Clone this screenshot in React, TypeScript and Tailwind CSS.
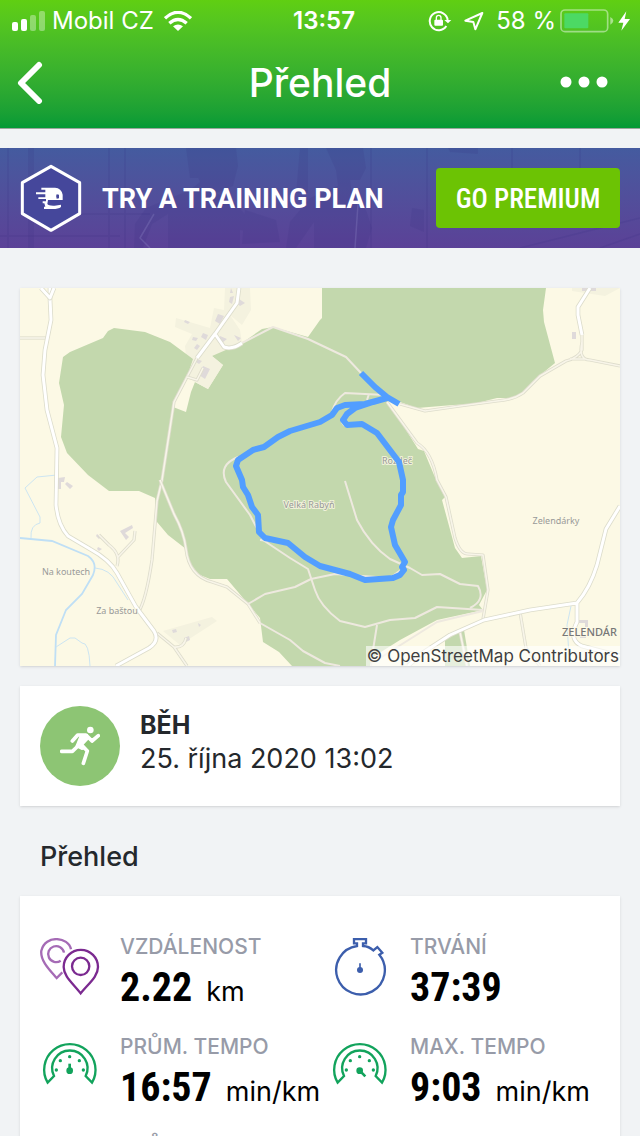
import type { ReactNode } from "react";

function StatusBar() {
  return (
    <div className="flex h-10 items-center pt-px pr-3 pl-3 text-2xl leading-10 text-white">
      <div className="flex flex-1 items-center gap-[6px]">
        <svg className="h-5 w-[34px]" viewBox="0 0 34 20" fill="#fff" aria-hidden="true">
          <rect x="0" y="11" width="6" height="9" rx="2" />
          <rect x="9" y="8" width="6" height="12" rx="2" />
          <rect x="18" y="4" width="6" height="16" rx="2" opacity=".35" />
          <rect x="27" y="0" width="6" height="20" rx="2" opacity=".35" />
        </svg>
        <span>Mobil CZ</span>
        <svg className="ml-1 h-5 w-7" viewBox="495 30 84 60" aria-hidden="true">
          <g fill="none" stroke="#fff" strokeWidth="10">
            <path d="M498 52Q537 16 576 52" />
            <path d="M511 67Q537 44 563 67" />
          </g>
          <path d="M522 76Q537 65 552 76L537 90Z" fill="#fff" />
        </svg>
      </div>
      <time className="pl-2 text-2xl font-semibold">13:57</time>
      <div className="flex flex-1 items-center justify-end">
        <svg className="mr-3 h-[22px] w-6" viewBox="325 28 72 66" aria-hidden="true">
          <path d="M380 76A27 27 0 1 1 384 58" fill="none" stroke="#fff" strokeWidth="6" />
          <path d="M374 58H395L385 68Z" fill="#fff" />
          <rect x="344" y="57" width="26" height="18" rx="3" fill="#fff" />
          <path d="M350 58V51A7 7 0 0 1 364 51V58" fill="none" stroke="#fff" strokeWidth="4" />
        </svg>
        <svg className="mr-3 h-5 w-5" viewBox="433 32 60 60" aria-hidden="true">
          <path d="M488 38L437 61L461 65L467 87Z" fill="none" stroke="#fff" strokeWidth="6" strokeLinejoin="round" />
        </svg>
        <span className="mr-1">58 %</span>
        <svg className="mr-1 h-6 w-[54px]" viewBox="719 26 162 72" aria-hidden="true">
          <rect x="722" y="29" width="140" height="65" rx="12" fill="none" stroke="#fff" strokeOpacity=".45" strokeWidth="5" />
          <rect x="732" y="39" width="72" height="45" rx="3" fill="#4cd964" />
          <path d="M870 50Q888 61 870 73Z" fill="#fff" opacity=".5" />
        </svg>
        <svg className="-mr-0.5 h-5 w-3" viewBox="895 31 36 58" aria-hidden="true">
          <path d="M920 31L896 65H911L905 89L931 54H915Z" fill="#fff" />
        </svg>
      </div>
    </div>
  );
}

function Header() {
  return (
    <header className="shrink-0 border-b border-[#9aa79d] bg-linear-to-b from-[#60cf12] to-[#039a36]">
      <StatusBar />
      <div className="flex h-[88px] items-center justify-between px-4 pb-1">
        <button type="button" aria-label="Zpět" className="flex w-20">
          <svg className="h-11 w-7" viewBox="0 0 28 44" fill="none" stroke="#fff" strokeWidth="6" strokeLinecap="round" strokeLinejoin="round" aria-hidden="true">
            <path d="M23 5L5 23L23 41" />
          </svg>
        </button>
        <h1 className="text-[39px] leading-none font-medium text-white">Přehled</h1>
        <button type="button" aria-label="Další možnosti" className="flex w-20 justify-end pr-4">
          <svg className="h-3 w-12" viewBox="0 0 48 12" fill="#fff" aria-hidden="true">
            <circle cx="6" cy="6" r="5.5" />
            <circle cx="24" cy="6" r="5.5" />
            <circle cx="42" cy="6" r="5.5" />
          </svg>
        </button>
      </div>
    </header>
  );
}

function PremiumBanner() {
  return (
    <section className="relative flex h-[100px] items-center bg-linear-to-b from-[#445b9f] to-[#5b4197] px-5">
      <svg className="absolute inset-0 h-full w-full" viewBox="0 0 640 100" preserveAspectRatio="none" aria-hidden="true">
        <g fill="#342c7c" opacity=".13">
          <path d="M196 0H236L238 18L233 38L216 45L236 56L250 72L256 84L240 82V100H168V66L152 76L143 100H134L135 76L146 60L190 42L200 34L194 20Z" />
          <path d="M326 0H363L366 20L360 32H350L352 48L366 62L372 80L366 100H314V74L296 100H286L290 74L310 50L338 38L336 22Z" />
          <path d="M186 0H200V30H190ZM300 0H308V45H296ZM28 0H34V100H28ZM245 62L276 72L280 94L242 96Z" />
          <path d="M448 0H478V6L450 4ZM412 60L424 62V84L410 78Z" />
        </g>
        <g fill="none" stroke="#342c7c" strokeOpacity=".14" strokeWidth="1.5">
          <path d="M8 0V100M109 0V100M125 0V100M371 0V100M427 0V100M512 0V80M580 0V60M0 88H120M70 66H150M640 70L520 100M640 86L600 100" />
        </g>
        <path d="M154 66L140 90L150 100M358 56L355 100" fill="none" stroke="#8d88c6" strokeOpacity=".3" strokeWidth="1.5" />
      </svg>
      <svg className="relative h-[68px] w-[62px]" viewBox="30 26 186 204" aria-hidden="true">
        <path d="M123 33L209 82V175L123 225L37 175V82Z" fill="#45479b" stroke="#fff" strokeWidth="9" strokeLinejoin="round" />
        <path d="M94 97H135Q154 98 158 118V134H122L114 134L112 146Q116 152 134 151L153 148V155Q145 161 128 161H102V154H106L103 144H98V138H108V131H85V126H106V117H78V111H106V103H94Z" fill="#fff" />
        <path d="M140 117L147 118V129L140 130Q136 124 140 117Z" fill="#45479b" />
      </svg>
      <p className="relative ml-5 flex-1 pt-0.5 font-[Roboto,sans-serif] text-[27px] leading-8 font-bold whitespace-nowrap text-white">TRY A TRAINING PLAN</p>
      <a href="#premium" className="relative flex h-15 w-[184px] items-center justify-center rounded bg-[#6cc304] pt-0.5 font-['Roboto_Condensed','Liberation_Sans_Narrow',Roboto,sans-serif] text-[27px] font-medium whitespace-nowrap text-white">
        GO PREMIUM
      </a>
    </section>
  );
}

const forest = [
  "M114 328L145 332L170 342L193 359L187 377L173 402V407L186 412L191 392L195 382L208 389L223 365L212 356L242 343L262 329L273 327L308 337L320 320L322 318V288H546L543 310L544 322L555 363L533 381L523 392L513 398H497L473 404L453 405L417 408L400 402L387 400L418 449L424 451L434 475L445 497L442 500L455 548L462 558L481 556L487 590L479 605L483 610L437 620L400 640L373 657L370 666H292L279 652L263 642L260 618L227 579H210L200 575L188 562L186 549L168 535L157 522L155 498L139 491H109L88 475L67 453L61 437L64 405L59 383L63 357L70 352L103 338L108 331Z",
  "M445 640L464 630L470 666H445Z",
];

const mainRoads = [
  "M50 288V299L51 320L45 350L43 375L47 410L57 448L56 505Q58 525 68 536L90 549Q110 560 117 573L136 607L154 631Q160 641 149 648L116 666",
  "M41 288L50 298L54 288",
  "M239 288L237 303L215 334L197 358M215 334L224 347Q232 350 242 343",
  "M590 288L578 307V315L582 335",
  "M620 506L606 529L597 565Q590 588 577 603L530 610L484 620L450 635L421 654L408 666M577 603V622Q568 640 582 646L620 656",
];

const tracks = [
  "M20 338H48",
  "M197 358L187 377L174 402L162 480L157 501L152 560Q146 600 139 611",
  "M187 377L197 380L203 368",
  "M582 335V350Q578 358 566 361L540 376L523 393Q513 400 497 401L460 406L425 411L400 404M582 342Q578 360 590 360L620 366M570 359H585",
  "M387 402L417 443Q432 452 437 480L446 497L455 538Q460 554 468 554L483 555L488 590L483 619",
  "M160 480L174 514Q184 532 186 549Q189 576 212 582L227 587L248 604L260 623",
  "M117 566Q121 554 109 545L99 535M118 557L134 540L135 531",
  "M157 633L174 647L187 666M174 647Q184 648 186 638",
  "M520 612L526 648L540 666M460 632L467 666",
];

const paths = [
  "M242 343L273 327L308 339L346 357L361 373",
  "M238 457Q218 465 226 482L250 515L263 540L290 558L308 569L315 590Q320 606 340 621L365 627L390 620L415 618L437 607L483 610",
  "M260 540L288 543M385 395L345 393Q335 400 332 412M346 413Q338 420 345 426M369 394L367 400",
  "M345 481L357 520Q370 545 390 559L410 568L422 575L440 574L460 584L478 586Q486 600 470 608",
  "M248 604L265 594L295 587L311 579L335 574L390 578L402 569",
  "M260 623L290 640L303 651L325 663L340 666M377 625L373 650L371 666",
  "M483 611L437 622L380 658",
];

const buildings =
  "M231 288L233 293H230ZM230 297L234 296L232 304L229 302ZM239 299L245 303L240 306L237 303ZM185 320L190 322L188 324L184 322ZM218 314L224 316L220 324L215 321ZM203 333L208 335L206 340L201 337ZM193 337L198 338L196 341L192 340ZM220 336L227 339L222 343L219 341ZM234 335L241 338L238 341ZM197 344L200 346L197 350L194 348ZM197 359L202 361L199 364L196 362ZM203 366L210 369L205 379L199 375ZM582 288H596V291H582ZM572 332H576V339H572ZM58 478L65 477L64 482H61V489H58ZM67 482L73 486L70 489L65 484ZM97 534L101 537L99 539L96 536ZM120 531L132 525L133 528L125 533L129 537L126 540ZM98 547L102 549L99 551L97 549ZM172 630L176 629L177 632L173 633ZM184 638L189 636L190 640L186 642ZM198 623L201 625L199 627ZM578 620H588V627H585V623H578ZM580 635H586V638H580Z";

const route =
  "M361 373L375 387L387 397L399 404M387 398L365 404L345 405L337 408L332 415L320 422L290 431L278 437L264 447L253 450L238 460L236 466L242 480L243 487L248 495L252 507L258 515L259 532L265 538L288 543L305 557L320 566L350 574L365 580L393 578L400 575L404 570L402 567L405 562L395 545L391 527L393 520L401 505V495L403 492V480L399 462L377 433L362 424L347 425L343 420L347 414L355 408L373 402L387 398";

function RouteMap() {
  return (
    <figure className="relative bg-[#fcf9e5] shadow-sm">
      <svg className="block w-full" viewBox="20 288 600 378" role="img" aria-label="Mapa trasy">
        <rect x="20" y="288" width="600" height="378" fill="#fcf9e5" />
        <path d="M225 288H250L251 310L242 325L230 315L240 330L242 343L223 365L208 389L188 377L185 346L192 334L175 327L176 318L210 328L214 308L224 310ZM572 288H620L605 296L572 291ZM163 631L212 617L217 621L180 645Z" fill="#f4f2df" />
        {forest.map((d) => (
          <path key={d} d={d} fill="#c3d8ad" />
        ))}
        <path d="M212 356L223 365L208 389L195 382L188 377L196 360Z" fill="#f4f2df" />
        <path d="M20 538L52 541L88 556Q98 563 93 575L82 594L66 610L56 635L55 666" fill="none" stroke="#bfdff5" strokeWidth="1.8" />
        <path d="M57 475L37 477L25 488L40 517V523Q30 525 31 538M95 568Q110 569 117 583L128 600M56 647L70 638H75L82 643Q89 642 90 666M571 606L567 625L569 655" fill="none" stroke="#cce5f2" />
        <path d={buildings} fill="#dfdada" />
        <g fill="none" strokeLinejoin="round">
          {tracks.map((d) => (
            <g key={d}>
              <path d={d} stroke="#deddcc" strokeWidth="3.2" />
              <path d={d} stroke="#f8f5e9" strokeWidth="1.6" />
            </g>
          ))}
          {paths.map((d) => (
            <path key={d} d={d} stroke="#eee9df" strokeWidth="2" />
          ))}
          {mainRoads.map((d) => (
            <g key={d}>
              <path d={d} stroke="#dcdccb" strokeWidth="4.6" />
              <path d={d} stroke="#fff" strokeWidth="3" />
            </g>
          ))}
        </g>
        <g className="font-['Noto_Sans',sans-serif]" fill="#999" fontSize="9" textAnchor="middle" stroke="#fcf9e5" strokeWidth="2" strokeOpacity=".8" paintOrder="stroke" strokeLinejoin="round">
          <text x="309" y="508">Velká Rabyň</text>
          <text x="397" y="464">Rozdeč</text>
          <text x="556" y="524">Zelendárky</text>
          <text x="66" y="575">Na koutech</text>
          <text x="117" y="614">Za baštou</text>
          <text x="562" y="636" fontSize="11" fontWeight="500" textAnchor="start" fill="#777">ZELENDÁR</text>
        </g>
        <path d={route} fill="none" stroke="#529eff" strokeWidth="6" strokeLinejoin="round" />
      </svg>
      <figcaption className="absolute right-0 bottom-0 bg-white/60 px-px text-[17px] leading-5 text-[#404040]">© OpenStreetMap Contributors</figcaption>
    </figure>
  );
}

function ActivityCard() {
  return (
    <section className="flex h-30 items-center gap-5 bg-white px-5 shadow-sm">
      <div className="flex size-20 items-center justify-center rounded-full bg-[#8dc574]">
        <svg className="size-10" viewBox="150 138 120 120" fill="none" stroke="#fff" strokeWidth="11" strokeLinecap="round" strokeLinejoin="round" aria-hidden="true">
          <circle cx="241" cy="150" r="10" fill="#fff" stroke="none" />
          <path d="M187 183L203 165H228L246 183L265 167M204 198L187 214H155M212 192L232 213L220 250" />
          <path d="M212 164H232L234 177L217 195L226 206L216 208L198 199Z" fill="#fff" strokeWidth="4" />
        </svg>
      </div>
      <div className="pb-2 text-[27px] leading-[34px] text-[#24282c]">
        <h2 className="text-[25px] leading-[34px] font-bold">BĚH</h2>
        <p>25. října 2020 13:02</p>
      </div>
    </section>
  );
}

function DistanceIcon() {
  return (
    <svg className="size-15" viewBox="60 54 180 180" fill="none" strokeWidth="7" aria-hidden="true">
      <g stroke="#a56bb5">
        <path d="M153 88C146 50 76 43 64 92C60 122 90 151 110 174L127 157" />
        <path d="M132 98A24 24 0 1 0 122 122" />
      </g>
      <g stroke="#7b2a90">
        <path d="M182 220C160 191 131 170 131 141A51 51 0 0 1 234 141C234 170 205 191 182 220Z" />
        <circle cx="182" cy="139" r="26" />
      </g>
    </svg>
  );
}

function StopwatchIcon() {
  return (
    <svg className="size-15" viewBox="30 54 180 180" fill="none" stroke="#3c5eac" strokeWidth="7" aria-hidden="true">
      <path d="M111 78V70H102V57H138V70H129V78Q147 79 160 91L172 81L187 98L178 104A73 73 0 1 1 111 78Z" />
      <circle cx="120" cy="150" r="9" fill="#3c5eac" stroke="none" />
      <path d="M120 130V150" strokeWidth="5" />
    </svg>
  );
}

function GaugeIcon({ needle }: { needle: string }) {
  return (
    <svg className="size-15" viewBox="60 354 180 180" fill="none" stroke="#12a35c" strokeWidth="7" aria-hidden="true">
      <path d="M83 488A77 77 0 1 1 216 488L197 468A53 53 0 1 0 102 468Z" />
      <path d={needle} strokeWidth="8" />
      <g fill="#12a35c" stroke="none">
        <circle cx="149" cy="452" r="10" />
        <circle cx="149" cy="410" r="5" />
        <circle cx="121" cy="422" r="5" />
        <circle cx="178" cy="422" r="5" />
        <circle cx="109" cy="450" r="5" />
        <circle cx="190" cy="450" r="5" />
      </g>
    </svg>
  );
}

function Stat({ icon, label, value, unit }: { icon: ReactNode; label: string; value: string; unit?: string }) {
  return (
    <div className="flex h-[100px] gap-5">
      <div className="pt-2">{icon}</div>
      <dl className="whitespace-nowrap">
        <dt className="text-[21px] leading-[34px] font-medium text-[#979ba8]">{label}</dt>
        <dd className="flex items-baseline gap-[14px] text-black">
          <span className="font-['Roboto_Condensed','Liberation_Sans_Narrow',Roboto,sans-serif] text-[40px] leading-12 font-bold">{value}</span>
          {unit && <span className="text-[27px]">{unit}</span>}
        </dd>
      </dl>
    </div>
  );
}

const steady = "M149 431V452";
const fast = "M149 452L166 469";

export default function App() {
  return (
    <div className="flex h-screen flex-col bg-[#f1f3f5] font-[Inter,'Liberation_Sans',sans-serif]">
      <Header />
      <main className="flex-1 overflow-y-auto pt-[19px] [scrollbar-width:none]">
        <PremiumBanner />
        <div className="flex flex-col px-5 pt-10">
          <RouteMap />
          <div className="mt-5">
            <ActivityCard />
          </div>
          <h2 className="px-5 pt-[34px] pb-[22px] text-[27px] leading-[34px] font-medium text-[#24282c]">Přehled</h2>
          <section className="grid grid-cols-[29fr_27fr] bg-white px-5 pt-[34px] shadow-sm">
            <Stat icon={<DistanceIcon />} label="VZDÁLENOST" value="2.22" unit="km" />
            <Stat icon={<StopwatchIcon />} label="TRVÁNÍ" value="37:39" />
            <Stat icon={<GaugeIcon needle={steady} />} label="PRŮM. TEMPO" value="16:57" unit="min/km" />
            <Stat icon={<GaugeIcon needle={fast} />} label="MAX. TEMPO" value="9:03" unit="min/km" />
            <Stat icon={<GaugeIcon needle={steady} />} label="PRŮM. RYCHLOST" value="3.54" unit="km/h" />
            <Stat icon={<GaugeIcon needle={fast} />} label="MAX. RYCHLOST" value="6.63" unit="km/h" />
          </section>
        </div>
      </main>
    </div>
  );
}
